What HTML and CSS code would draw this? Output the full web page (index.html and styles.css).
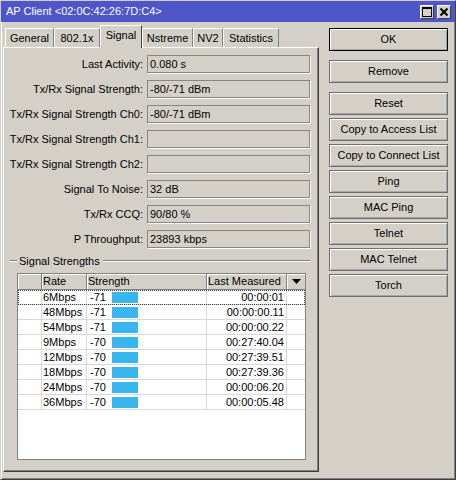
FILE: index.html
```html
<!DOCTYPE html>
<html>
<head>
<meta charset="utf-8">
<link rel="stylesheet" href="styles.css">
</head>
<body>
<div class="window">
  <div class="titlebar">
    <span class="title">AP Client &lt;02:0C:42:26:7D:C4&gt;</span>
    <div class="tbtns">
      <span class="tbtn"><svg width="12" height="12" viewBox="0 0 12 12"><rect x="1.5" y="1.5" width="9" height="9" fill="none" stroke="#000" stroke-width="1"/><rect x="1" y="1" width="10" height="2" fill="#000"/></svg></span>
      <span class="tbtn"><svg width="12" height="12" viewBox="0 0 12 12"><path d="M2.5 2.5 L9.5 9.5 M9.5 2.5 L2.5 9.5" stroke="#000" stroke-width="2"/></svg></span>
    </div>
  </div>
  <div class="main">
    <div class="left">
      <div class="tabs">
        <div class="tab t-general">General</div>
        <div class="tab t-8021x">802.1x</div>
        <div class="tab t-signal sel">Signal</div>
        <div class="tab t-nstreme">Nstreme</div>
        <div class="tab t-nv2">NV2</div>
        <div class="tab t-stats">Statistics</div>
      </div>
      <div class="panel">
        <div class="row"><span class="lbl">Last Activity:</span><span class="fld">0.080 s</span></div>
        <div class="row"><span class="lbl">Tx/Rx Signal Strength:</span><span class="fld">-80/-71 dBm</span></div>
        <div class="row"><span class="lbl">Tx/Rx Signal Strength Ch0:</span><span class="fld">-80/-71 dBm</span></div>
        <div class="row"><span class="lbl">Tx/Rx Signal Strength Ch1:</span><span class="fld"></span></div>
        <div class="row"><span class="lbl">Tx/Rx Signal Strength Ch2:</span><span class="fld"></span></div>
        <div class="row"><span class="lbl">Signal To Noise:</span><span class="fld">32 dB</span></div>
        <div class="row"><span class="lbl">Tx/Rx CCQ:</span><span class="fld">90/80 %</span></div>
        <div class="row"><span class="lbl">P Throughput:</span><span class="fld">23893 kbps</span></div>
        <div class="legend"><span class="ln short"></span><span class="ltxt">Signal Strengths</span><span class="ln fill"></span></div>
        <div class="grid">
          <div class="hdr">
            <div class="hc"></div>
            <div class="hc">Rate</div>
            <div class="hc">Strength</div>
            <div class="hc">Last Measured</div>
            <div class="hc dd"><svg width="9" height="5" viewBox="0 0 9 5"><path d="M0 0 H9 L4.5 5 Z" fill="#000"/></svg></div>
          </div>
          <div class="r focus"><div class="c"></div><div class="c rate">6Mbps</div><div class="c str"><span class="val">-71</span><span class="bar"></span></div><div class="c lm">00:00:01</div><div class="c"></div></div>
          <div class="r"><div class="c"></div><div class="c rate">48Mbps</div><div class="c str"><span class="val">-71</span><span class="bar"></span></div><div class="c lm">00:00:00.11</div><div class="c"></div></div>
          <div class="r"><div class="c"></div><div class="c rate">54Mbps</div><div class="c str"><span class="val">-71</span><span class="bar"></span></div><div class="c lm">00:00:00.22</div><div class="c"></div></div>
          <div class="r"><div class="c"></div><div class="c rate">9Mbps</div><div class="c str"><span class="val">-70</span><span class="bar"></span></div><div class="c lm">00:27:40.04</div><div class="c"></div></div>
          <div class="r"><div class="c"></div><div class="c rate">12Mbps</div><div class="c str"><span class="val">-70</span><span class="bar"></span></div><div class="c lm">00:27:39.51</div><div class="c"></div></div>
          <div class="r"><div class="c"></div><div class="c rate">18Mbps</div><div class="c str"><span class="val">-70</span><span class="bar"></span></div><div class="c lm">00:27:39.36</div><div class="c"></div></div>
          <div class="r"><div class="c"></div><div class="c rate">24Mbps</div><div class="c str"><span class="val">-70</span><span class="bar"></span></div><div class="c lm">00:00:06.20</div><div class="c"></div></div>
          <div class="r"><div class="c"></div><div class="c rate">36Mbps</div><div class="c str"><span class="val">-70</span><span class="bar"></span></div><div class="c lm">00:00:05.48</div><div class="c"></div></div>
        </div>
      </div>
    </div>
    <div class="buttons">
      <button class="btn def gap">OK</button>
      <button class="btn gap">Remove</button>
      <button class="btn">Reset</button>
      <button class="btn">Copy to Access List</button>
      <button class="btn">Copy to Connect List</button>
      <button class="btn">Ping</button>
      <button class="btn">MAC Ping</button>
      <button class="btn">Telnet</button>
      <button class="btn">MAC Telnet</button>
      <button class="btn">Torch</button>
    </div>
  </div>
</div>
</body>
</html>
```
FILE: styles.css
```css
html, body {
  margin: 0;
  padding: 0;
  background: #d4d0c8;
  font-family: "Liberation Sans", Arial, sans-serif;
  font-size: 11px;
  font-weight: 400;
  color: #000;
}
.window {
  width: 456px;
  height: 480px;
  box-sizing: border-box;
  background: #d4d0c8;
  border: 1px solid;
  border-color: #d4d0c8 #404040 #404040 #d4d0c8;
  box-shadow: inset 1px 1px 0 #fff, inset -1px -1px 0 #808080;
  display: flex;
  flex-direction: column;
}
.titlebar {
  height: 21px;
  background: #4f56c9;
  color: #fff;
  display: flex;
  align-items: center;
  justify-content: space-between;
  padding: 0 4px 0 5px;
}
.title { line-height: 21px; }
.tbtns { display: flex; gap: 3px; }
.tbtn {
  width: 14px;
  height: 14px;
  box-sizing: border-box;
  background: #d4d0c8;
  border: 1px solid;
  border-color: #fff #404040 #404040 #fff;
  display: flex;
  align-items: center;
  justify-content: center;
}
.tbtn svg { display: block; }
.main {
  display: flex;
  padding: 2px 0 0 2px;
}
.left { width: 316px; }
.tabs {
  display: flex;
  align-items: flex-end;
  height: 23px;
  padding-left: 2px;
}
.tab {
  height: 19px;
  box-sizing: border-box;
  border-top: 1px solid #fff;
  border-left: 1px solid #fff;
  border-right: 1px solid #808080;
  text-align: center;
  line-height: 18px;
  white-space: nowrap;
}
.t-general { width: 49px; }
.t-8021x { width: 46px; }
.t-signal { width: 42px; }
.t-nstreme { width: 51px; }
.t-nv2 { width: 30px; }
.t-stats { width: 56px; }
.tab.sel {
  height: 23px;
  margin-bottom: -1px;
  position: relative;
  z-index: 1;
  background: #d4d0c8;
  border-right-color: #404040;
  line-height: 19px;
}
.panel {
  height: 425px;
  box-sizing: border-box;
  border: 1px solid;
  border-color: #fff #404040 #404040 #fff;
  box-shadow: inset -1px -1px 0 #808080;
  padding-top: 7px;
}
.row {
  display: flex;
  height: 18px;
  margin-bottom: 7px;
}
.lbl {
  width: 139px;
  text-align: right;
  line-height: 19px;
  white-space: nowrap;
}
.fld {
  margin-left: 4px;
  width: 163px;
  height: 18px;
  box-sizing: border-box;
  border: 1px solid #858585;
  box-shadow: 1px 1px 0 #fff;
  padding-left: 2px;
  line-height: 17px;
}
.legend {
  display: flex;
  align-items: center;
  height: 12px;
  margin: 0 8px 6px 6px;
}
.ln {
  height: 0;
  border-top: 1px solid #808080;
  border-bottom: 1px solid #fff;
}
.ln.short { width: 7px; }
.ln.fill { flex: 1; }
.ltxt { padding: 0 3px 0 2px; line-height: 12px; }
.grid {
  margin-left: 13px;
  width: 289px;
  height: 187px;
  box-sizing: border-box;
  border: 1px solid #808080;
  background: #fff;
}
.hdr, .r {
  display: grid;
  grid-template-columns: 24px 45px 120px 80px 18px;
}
.hdr {
  height: 16px;
  box-sizing: border-box;
  background: #d4d0c8;
  border-bottom: 1px solid #808080;
}
.hc {
  box-sizing: border-box;
  border-right: 1px solid #808080;
  box-shadow: inset 1px 1px 0 #fff;
  padding-left: 1px;
  line-height: 15px;
  white-space: nowrap;
}
.hc.dd {
  border-right: none;
  display: flex;
  align-items: center;
  justify-content: center;
  padding-left: 0;
}
.r {
  height: 15px;
  box-sizing: border-box;
  border-bottom: 1px solid #d8d8d8;
}
.r.focus {
  outline: 1px dotted #444;
  outline-offset: -1px;
}
.c {
  box-sizing: border-box;
  border-right: 1px solid #d8d8d8;
  line-height: 14px;
  white-space: nowrap;
}
.r .c:last-child { border-right: none; }
.rate { padding-left: 1px; }
.str {
  display: flex;
  align-items: center;
  padding-left: 3px;
}
.val { width: 22px; }
.bar {
  width: 26px;
  height: 11px;
  background: #3ab6ef;
}
.lm {
  text-align: right;
  padding-right: 2px;
}
.buttons {
  margin-left: 10px;
  margin-top: 4px;
  width: 119px;
  display: flex;
  flex-direction: column;
}
.btn {
  height: 23px;
  box-sizing: border-box;
  margin: 0 0 3px 0;
  padding: 0;
  background: #d4d0c8;
  border: 1px solid #6e6e6e;
  box-shadow: inset 1px 1px 0 #fff, inset -1px -1px 0 #a8a8a8;
  font-family: "Liberation Sans", Arial, sans-serif;
  font-size: 11px;
  font-weight: 400;
  color: #000;
  text-align: center;
  line-height: 21px;
  white-space: nowrap;
}
.btn.gap { margin-bottom: 9px; }
.btn.def { border-color: #000; }
```
